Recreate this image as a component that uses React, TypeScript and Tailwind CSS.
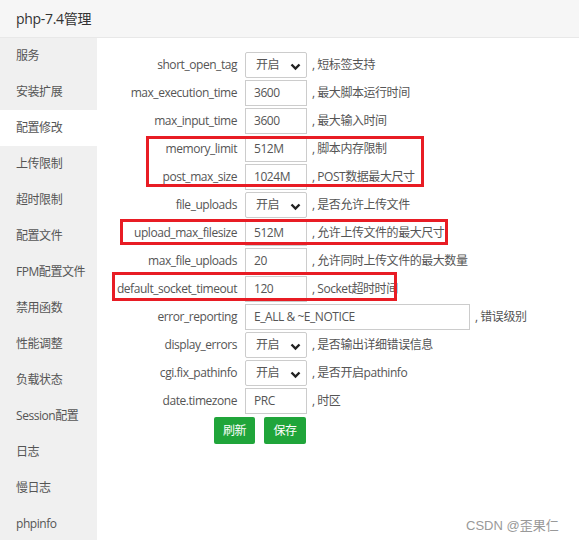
const menu = [
  '服务',
  '安装扩展',
  '配置修改',
  '上传限制',
  '超时限制',
  '配置文件',
  'FPM配置文件',
  '禁用函数',
  '性能调整',
  '负载状态',
  'Session配置',
  '日志',
  '慢日志',
  'phpinfo',
];

type Row = { name: string; value: string; note: string; select?: boolean; wide?: boolean };

const rows: Row[] = [
  { name: 'short_open_tag', value: '开启', note: ', 短标签支持', select: true },
  { name: 'max_execution_time', value: '3600', note: ', 最大脚本运行时间' },
  { name: 'max_input_time', value: '3600', note: ', 最大输入时间' },
  { name: 'memory_limit', value: '512M', note: ', 脚本内存限制' },
  { name: 'post_max_size', value: '1024M', note: ', POST数据最大尺寸' },
  { name: 'file_uploads', value: '开启', note: ', 是否允许上传文件', select: true },
  { name: 'upload_max_filesize', value: '512M', note: ', 允许上传文件的最大尺寸' },
  { name: 'max_file_uploads', value: '20', note: ', 允许同时上传文件的最大数量' },
  { name: 'default_socket_timeout', value: '120', note: ', Socket超时时间' },
  { name: 'error_reporting', value: 'E_ALL & ~E_NOTICE', note: ', 错误级别', wide: true },
  { name: 'display_errors', value: '开启', note: ', 是否输出详细错误信息', select: true },
  { name: 'cgi.fix_pathinfo', value: '开启', note: ', 是否开启pathinfo', select: true },
  { name: 'date.timezone', value: 'PRC', note: ', 时区' },
];

function Chevron() {
  return (
    <svg width="11" height="8" viewBox="0 0 11 8" className="absolute right-[5px] top-[10px]">
      <path d="M1.5 1.5 L5.5 5.5 L9.5 1.5" fill="none" stroke="#222" strokeWidth="2.4" />
    </svg>
  );
}

export default function App() {
  return (
    <div
      className="relative h-[540px] w-[579px] overflow-hidden bg-white text-[12px] tracking-[-0.45px] text-[#555]"
      style={{ fontFamily: '"Open Sans", "Noto Sans CJK SC", sans-serif' }}
    >
      <div className="flex h-[38px] items-center border-b border-[#e8e8e8] bg-[#f6f6f6] pl-[16px] text-[14px] tracking-[-0.3px] text-[#333]">
        php-7.4管理
      </div>

      <div className="flex">
        <ul className="w-[97px] shrink-0 bg-[#f0f0f0]">
          {menu.map((m, i) => (
            <li
              key={m}
              className={`flex h-[36px] items-center pl-[16px] ${i === 2 ? 'bg-white' : ''}`}
            >
              {m}
            </li>
          ))}
        </ul>

        <div className="flex-1 pt-[14px]">
          {rows.map((r) => (
            <div key={r.name} className="mb-[2px] flex h-[26px] items-center">
              <div className="w-[140px] shrink-0 text-right">{r.name}</div>
              <div
                className={`relative ml-[8px] flex h-[26px] shrink-0 items-center border border-[#ccc] pl-[8px] text-[#555] ${
                  r.wide ? 'w-[225px]' : 'w-[62px]'
                } ${r.select ? 'rounded-[2px] pl-[10px] text-[#333]' : ''}`}
              >
                {r.value}
                {r.select && <Chevron />}
              </div>
              <div className="ml-[5px] whitespace-nowrap">{r.note}</div>
            </div>
          ))}

          <div className="mt-[3px] flex gap-[9px] pl-[117px]">
            <button className="h-[27px] w-[41px] rounded-[2px] bg-[#20a53a] text-[12px] text-white">
              刷新
            </button>
            <button className="h-[27px] w-[42px] rounded-[2px] bg-[#20a53a] text-[12px] text-white">
              保存
            </button>
          </div>
        </div>
      </div>

      {/* red highlight boxes */}
      <div className="absolute left-[146px] top-[136px] h-[51px] w-[278px] border-[3px] border-[#e81c24]" />
      <div className="absolute left-[120px] top-[219px] h-[26px] w-[328px] border-[3px] border-[#e81c24]" />
      <div className="absolute left-[112px] top-[272px] h-[29px] w-[285px] border-[3px] border-[#e81c24]" />

      <div
        className="absolute left-[466px] top-[516px] text-[13px] tracking-normal text-[#999]"
        style={{ fontFamily: '"Liberation Sans", "Noto Sans CJK SC", sans-serif' }}
      >
        CSDN @歪果仁
      </div>
    </div>
  );
}
